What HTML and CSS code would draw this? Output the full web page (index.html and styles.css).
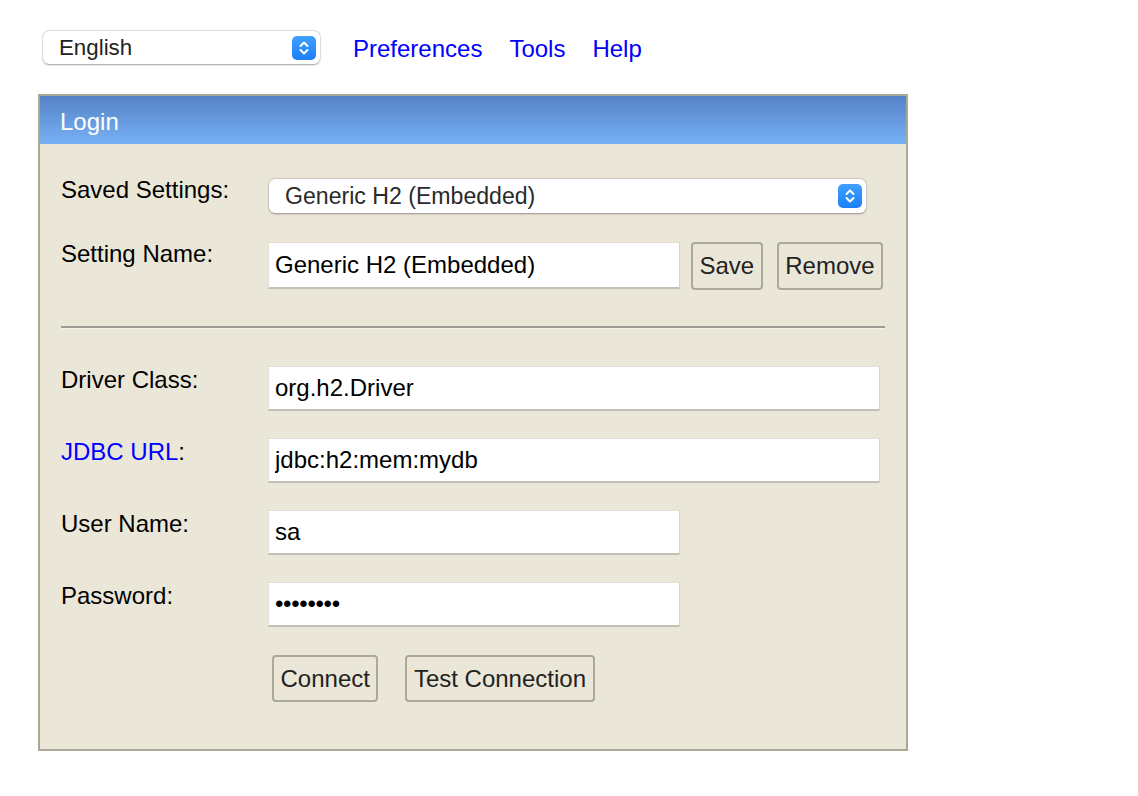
FILE: index.html
```html
<!DOCTYPE html>
<html lang="en">
<head>
<meta charset="utf-8">
<title>H2 Console</title>
<link rel="stylesheet" href="styles.css">
</head>
<body>
<div class="page">
  <div class="toolbar">
    <div class="select select-lang">
      <span class="select-text">English</span>
      <span class="select-btn"><svg viewBox="0 0 24 24" width="24" height="24"><path d="M8.5 10 L12 6.5 L15.5 10 M8.5 14 L12 17.5 L15.5 14" fill="none" stroke="#fff" stroke-width="2" stroke-linecap="round" stroke-linejoin="round"/></svg></span>
    </div>
    <nav class="links">
      <a href="#" class="link">Preferences</a>
      <a href="#" class="link">Tools</a>
      <a href="#" class="link">Help</a>
    </nav>
  </div>

  <div class="box">
    <div class="box-head">Login</div>
    <div class="box-body">
      <div class="row row-first">
        <div class="label">Saved Settings:</div>
        <div class="select select-saved">
          <span class="select-text">Generic H2 (Embedded)</span>
          <span class="select-btn"><svg viewBox="0 0 24 24" width="24" height="24"><path d="M8.5 10 L12 6.5 L15.5 10 M8.5 14 L12 17.5 L15.5 14" fill="none" stroke="#fff" stroke-width="2" stroke-linecap="round" stroke-linejoin="round"/></svg></span>
        </div>
      </div>
      <div class="row row-name">
        <div class="label">Setting Name:</div>
        <input class="input input-short input-tall" type="text" value="Generic H2 (Embedded)">
        <button class="btn btn-save">Save</button>
        <button class="btn btn-remove">Remove</button>
      </div>
      <hr class="sep">
      <div class="row row-field row-after-sep">
        <div class="label">Driver Class:</div>
        <input class="input input-long" type="text" value="org.h2.Driver">
      </div>
      <div class="row row-field">
        <div class="label"><a href="#" class="link-inline">JDBC URL</a>:</div>
        <input class="input input-long" type="text" value="jdbc:h2:mem:mydb">
      </div>
      <div class="row row-field">
        <div class="label">User Name:</div>
        <input class="input input-short" type="text" value="sa">
      </div>
      <div class="row row-field">
        <div class="label">Password:</div>
        <input class="input input-short input-pw" type="password" value="password">
      </div>
      <div class="actions">
        <button class="btn btn-connect">Connect</button>
        <button class="btn btn-test">Test Connection</button>
      </div>
    </div>
  </div>
</div>
</body>
</html>
```

FILE: styles.css
```css
html, body {
  margin: 0;
  padding: 0;
  background: #ffffff;
}

body {
  font-family: "Liberation Sans", Arial, Helvetica, sans-serif;
  font-size: 24px;
  color: #000;
}

.page {
  padding: 31px 0 0 38px;
}

.toolbar {
  display: flex;
  align-items: center;
  height: 33px;
  padding-left: 5px;
}

.select {
  display: flex;
  align-items: center;
  justify-content: space-between;
  box-sizing: border-box;
  background: #fff;
  border-radius: 6px;
  box-shadow: 0 0.5px 2px rgba(0, 0, 0, 0.35), 0 0 0 0.5px rgba(0, 0, 0, 0.08);
  padding: 0 4px 0 16px;
  color: #222;
}

.select-lang {
  width: 277px;
  height: 33px;
  font-size: 22.3px;
}

.select-saved {
  width: 597px;
  height: 34px;
  font-size: 23.1px;
  margin-top: 3px;
  margin-left: 1px;
  color: #2a2a2a;
}

.select-text {
  line-height: 26px;
}

.select-btn {
  display: block;
  width: 24px;
  height: 24px;
  border-radius: 5px;
  background: linear-gradient(#42a0ff, #1b7ff6);
}

.select-btn svg {
  display: block;
}

.links {
  display: flex;
  gap: 27px;
  margin-left: 33px;
  padding-top: 2px;
}

.link {
  color: #0000ff;
  text-decoration: none;
  line-height: 27px;
}

.link-inline {
  color: #0000ff;
  text-decoration: none;
}

.box {
  margin-top: 30px;
  width: 866px;
  border: 2px solid #aaa796;
  background: #ebe7d8;
}

.box-head {
  padding: 12px 20px 9px;
  line-height: 27px;
  color: #fff;
  background: linear-gradient(#5582c6, #77b1f5);
}

.box-body {
  padding: 0 21px 47px;
}

.row {
  display: flex;
  align-items: flex-start;
}

.row-first {
  padding-top: 32px;
}

.row-name {
  margin-top: 27px;
}

.row-field {
  margin-top: 27px;
}

.row-after-sep {
  margin-top: 37px;
}

.label {
  width: 207px;
  flex: none;
  line-height: 27px;
}

.input {
  box-sizing: border-box;
  height: 45px;
  margin: 0;
  padding: 0 6px;
  border: 1px solid;
  border-color: #e2dfd3 #d6d3c7 #c3c0b4 #e2dfd3;
  border-bottom-width: 2px;
  background: #fff;
  font-family: inherit;
  font-size: 24px;
  color: #000;
  outline: none;
}

.input-tall {
  height: 47px;
  margin-top: 2px;
}

.input-short {
  width: 412px;
}

.input-long {
  width: 612px;
}

.input-pw {
  letter-spacing: -0.3px;
}

.btn {
  box-sizing: border-box;
  height: 48px;
  margin: 0;
  padding: 0 6.5px;
  border: 2px solid #aca999;
  border-radius: 4px;
  background: #ebe7d8;
  font-family: inherit;
  font-size: 24px;
  color: #222;
}

.btn-save {
  margin: 2px 0 0 11px;
}

.btn-remove {
  margin: 2px 0 0 14px;
}

.sep {
  margin: 36px 0 0;
  height: 0;
  border: 0;
  border-top: 2px solid #9d9b93;
  border-bottom: 1px solid #f4f2ea;
}

.actions {
  display: flex;
  gap: 27px;
  margin-top: 28px;
  padding-left: 211px;
}

.actions .btn {
  height: 47px;
}
```
